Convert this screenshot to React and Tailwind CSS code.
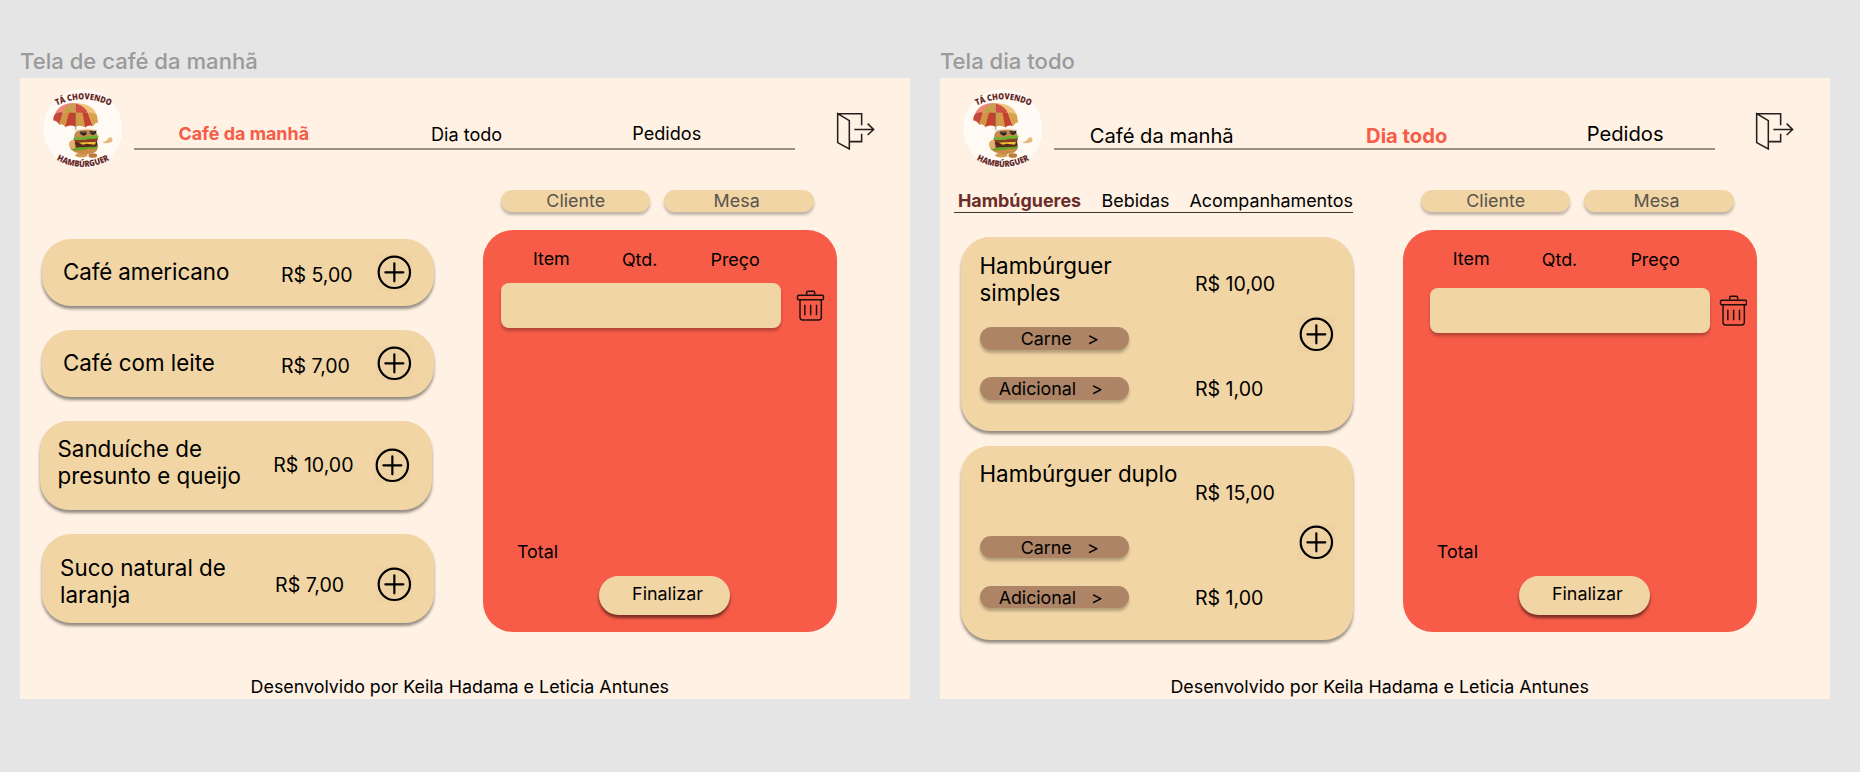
import React from "react";

const cardShadow = "shadow-[0_3px_3px_rgba(0,0,0,0.42)]";

function Logo({ id }) {
  return (
    <svg className="mt-[10.5px] ml-[22.3px] h-[81.6px] w-[81.6px] shrink-0" viewBox="37.6 24.6 244.8 244.8">
      <defs>
        <path id={`${id}-top`} d="M82 77 Q160 40 242 78" />
        <path id={`${id}-bottom`} d="M81 240 Q160 283 240 240" />
      </defs>
      <circle cx="160" cy="147" r="121" fill="#fffaf4" stroke="#f3e8dc" strokeWidth="1.5" />
      <g fill="#642726" className="font-['Open_Sans',sans-serif] text-[26px] font-extrabold">
        <text>
          <textPath href={`#${id}-top`} textLength="166" lengthAdjust="spacingAndGlyphs">TÁ CHOVENDO</textPath>
        </text>
        <text>
          <textPath href={`#${id}-bottom`} textLength="166" lengthAdjust="spacingAndGlyphs">HAMBÚRGUER</textPath>
        </text>
      </g>
      {/* umbrella */}
      <path d="M138 70 C108 68 84 82 77 102 Q88 94 101 98 Q108 80 138 70Z" fill="#ee8877" />
      <path d="M138 70 C114 74 102 86 100 98 Q118 101 138 99Z" fill="#c6a04a" />
      <path d="M138 70 C160 72 172 84 175 98 Q156 101 138 99Z" fill="#cf4f43" />
      <path d="M138 70 C174 70 196 84 202 105 Q188 96 175 98 Q168 80 138 70Z" fill="#f0c67f" />
      <path d="M77 102 Q88 94 101 98 L90 135 Q82 122 71 122Q71 110 77 102Z" fill="#c5483a" />
      <path d="M101 98 L118 99 L108 142 Q100 130 88 135Z" fill="#d09443" />
      <path d="M118 99 H138 V141 Q122 133 107 142Z" fill="#c4412f" />
      <path d="M138 98 L160 99 L168 143 Q152 134 138 141Z" fill="#d09a48" />
      <path d="M159 99 L175 98 L190 139 Q178 133 167 143Z" fill="#c4412f" />
      <path d="M175 98 Q190 96 202 105 L206 127 Q198 128 190 139Z" fill="#dba24e" />
      <path d="M138 98 L139 150" stroke="#6c5540" strokeWidth="2" />
      {/* burger */}
      <ellipse cx="156" cy="226" rx="18" ry="7" fill="#d39a52" />
      <ellipse cx="190" cy="227" rx="13" ry="7" fill="#b97a3a" />
      <path d="M124 206 Q160 196 204 202 Q206 222 168 223 Q132 222 124 206Z" fill="#c98b45" />
      <path d="M122 208 Q134 194 160 201 Q184 190 207 203 Q196 210 178 206 Q150 216 122 208Z" fill="#63a62a" />
      <path d="M134 184 L202 180 L205 200 L134 203Z" fill="#57291a" />
      <path d="M146 188 L200 186 L196 195 L172 192 L160 195Z" fill="#f2c035" />
      <path d="M132 178 L206 174 L203 184 L134 188Z" fill="#8d3d24" />
      <path d="M134 176 Q132 152 156 149 L184 149 Q204 151 204 171 Q168 176 134 176Z" fill="#c58a4e" />
      <path d="M130 178 Q136 168 158 174 Q184 164 208 168 Q206 180 184 176 Q154 184 130 178Z" fill="#6cb22f" />
      <path d="M138 153 Q168 143 202 152" fill="none" stroke="#f3dcc0" strokeWidth="4" />
      <path d="M151 156 L171 155 Q174 166 162 167 Q152 166 151 156Z M180 154 L201 153 Q201 164 190 165 Q181 164 180 154Z" fill="#231a18" />
      <path d="M154 160 L169 158 M183 158 L197 156" stroke="#8f8a86" strokeWidth="2" />
      <path d="M135 178 Q116 182 119 198 Q122 210 133 207 Q142 202 137 194Z" fill="#e2ae6c" />
      <path d="M218 184 Q228 190 238 174 Q246 170 249 178 Q252 188 232 190 Q220 190 218 184Z" fill="#e6b878" />
    </svg>
  );
}

function LogoutIcon() {
  return (
    <svg className="mt-[33.7px] ml-[40.1px] h-[38.3px] w-[39.3px] shrink-0" viewBox="0 0 118 115" fill="none" stroke="#231f20" strokeWidth="4.6">
      <path d="M5 5 V92 L40 111 V26Z M5 5 H77 V40 M77 65 V89 H42 M55 52.500 H112 M95 35 L113 52.500 L95 69" />
    </svg>
  );
}

function TrashIcon() {
  return (
    <svg className="mt-[7.3px] h-[31.3px] w-[28.7px] shrink-0" viewBox="0 0 86 94" fill="none" stroke="#1c0f0d" strokeWidth="4.400">
      <path d="M32 14 V8 Q32 4 36 4 H52 Q56 4 56 8 V14" />
      <rect x="4.500" y="15.500" width="78" height="14" rx="4" />
      <path d="M12 30 V82 Q12 90 20 90 H68 Q76 90 76 82 V30 M26.500 44 V76 M44 44 V76 M61.500 44 V76" />
    </svg>
  );
}

function PlusIcon({ className = "" }) {
  return (
    <svg className={`h-[36.7px] w-[36.7px] shrink-0 ${className}`} viewBox="0 0 110 110" fill="none" stroke="#000" strokeWidth="6.500">
      <rect width="110" height="110" fill="#efd2a2" stroke="none" />
      <circle cx="55" cy="55" r="47" />
      <path d="M55 28 V82 M28 55 H82" strokeLinecap="round" />
    </svg>
  );
}

function Pill({ children, className = "" }) {
  return (
    <div className={`h-[22.4px] w-[149.4px] rounded-full text-[17.9px] leading-[22px] whitespace-pre shadow-[0_3px_3px_rgba(0,0,0,0.25)] ${className}`}>
      {children}
    </div>
  );
}

function OrderPanel({ rowClass, gapClass }) {
  return (
    <section className="w-[353.6px] shrink-0 pt-[11.7px]">
      <div className="flex gap-[14px] pl-[17.7px]">
        <Pill className="bg-[#f1d5a4] text-center text-[#58534e]">Cliente</Pill>
        <Pill className="bg-[#f1d5a4] pr-[5px] text-center text-[#58534e]">Mesa</Pill>
      </div>
      <div className="mt-[17.9px] h-[402.5px] rounded-[30px] bg-[#f65c48] pt-[16.8px] text-[17.9px] leading-[24px]">
        <div className="grid h-[26px] grid-cols-[89px_88.600px_auto] pl-[49.5px]">
          <span>Item</span>
          <span className="pt-[1.2px]">Qtd.</span>
          <span className="pt-[1.5px]">Preço</span>
        </div>
        <div className={`flex h-[267px] items-start ${rowClass} ${gapClass}`}>
          <div className="h-[45.4px] w-[280px] shrink-0 rounded-[8px] bg-[#f1d5a4] shadow-[0_3px_3px_rgba(0,0,0,0.25)]" />
          <TrashIcon />
        </div>
        <div className="pl-[33.5px]">Total</div>
        <button className="mt-[12.2px] ml-[115.7px] block h-[38.8px] w-[131px] rounded-full bg-[#f1d5a4] pb-[1.6px] pl-[33px] text-left shadow-[0_3px_3px_rgba(0,0,0,0.5)]">
          Finalizar
        </button>
      </div>
    </section>
  );
}

function Frame({ id, title, navClass, nav, children, rowClass, gapClass }) {
  return (
    <div className="w-[889.8px] shrink-0">
      <h2 className="h-[30.2px] text-[22.1px] leading-[27px] font-medium text-[#9a9a9a]">{title}</h2>
      <main className="h-[621.4px] bg-[#fff1e3] text-black">
        <header className="flex h-[100px] items-start">
          <Logo id={id} />
          <nav className={`ml-[10.1px] grid h-[72px] w-[661.5px] items-start border-b-2 border-[#9b9188] leading-[24px] ${navClass}`}>
            {nav.map(([label, cls]) => (
              <a key={label} className={cls}>{label}</a>
            ))}
          </nav>
          <LogoutIcon />
        </header>
        <div className="flex h-[480px]">
          <div className="w-[463.4px] shrink-0">{children}</div>
          <OrderPanel rowClass={rowClass} gapClass={gapClass} />
        </div>
        <footer className="pt-[17.2px] pl-[230.6px] text-[17.86px] leading-[24px]">
          Desenvolvido por Keila Hadama e Leticia Antunes
        </footer>
      </main>
    </div>
  );
}

const breakfast = [
  { name: ["Café americano"], price: "R$ 5,00", card: "h-[66.8px] ml-[21.6px] mb-[24.200px] grid-cols-[218px_94.700px_auto] pl-[21.3px]", nameCls: "pb-[2px] tracking-[-0.07px]", priceCls: "pt-[5px]", plusCls: "" },
  { name: ["Café com leite"], price: "R$ 7,00", card: "h-[66.8px] ml-[21.6px] mb-[24.200px] grid-cols-[218px_94.700px_auto] pl-[21.3px]", nameCls: "pb-[2px]", priceCls: "pt-[5px]", plusCls: "" },
  { name: ["Sanduíche de", "presunto e queijo"], price: "R$ 10,00", card: "h-[89px] ml-[19.6px] mb-[24px] grid-cols-[215.800px_100.400px_auto] pl-[17.9px]", nameCls: "pb-[7.4px]", priceCls: "", plusCls: "-mt-px" },
  { name: ["Suco natural de", "laranja"], price: "R$ 7,00", card: "h-[89px] ml-[21.6px] grid-cols-[215px_101px_auto] pl-[18.5px]", nameCls: "pt-[5.8px]", priceCls: "pt-[12.6px]", plusCls: "mt-[11.4px]" },
];

function BreakfastCard({ item }) {
  return (
    <article className={`grid w-[392.4px] items-center rounded-[29px] bg-[#f1d5a4] ${cardShadow} ${item.card}`}>
      <div className={`text-[22.36px] leading-[27px] ${item.nameCls}`}>
        {item.name.map((line) => <div key={line} className="whitespace-nowrap">{line}</div>)}
      </div>
      <div className={`text-[19.56px] leading-[24px] ${item.priceCls}`}>{item.price}</div>
      <PlusIcon className={item.plusCls} />
    </article>
  );
}

function BurgerCard({ name, price, className }) {
  return (
    <article className={`ml-[21.6px] grid h-[193.7px] w-[391.9px] grid-cols-[215.500px_103px_auto] items-start rounded-[29px] bg-[#f1d5a4] pl-[18px] ${cardShadow} ${className}`}>
      <div className="pt-[14.2px]">
        <div className="h-[54px] text-[22.36px] leading-[27px]">
          {name.map((line) => <div key={line} className="whitespace-nowrap">{line}</div>)}
        </div>
        <Pill className="mt-[21.6px] ml-[0.200px] bg-[#ae8466] pl-[41px] leading-[23px]">{"Carne   >"}</Pill>
        <Pill className="mt-[27.6px] ml-[0.200px] bg-[#ae8466] pl-[19px] leading-[23px] tracking-[-0.05px]">{"Adicional   >"}</Pill>
      </div>
      <div className="pt-[35px] text-[19.56px] leading-[24px]">
        <div>{price}</div>
        <div className="mt-[81px]">R$ 1,00</div>
      </div>
      <PlusIcon className="mt-[78.3px]" />
    </article>
  );
}

export default function App() {
  return (
    <div className="flex h-[772px] w-[1860px] gap-[30.1px] overflow-hidden bg-[#e5e5e5] pt-[47.7px] pl-[20px] font-['Inter',sans-serif]">
      <Frame
        id="cafe"
        title="Tela de café da manhã"
        navClass="grid-cols-[252.500px_201.300px_auto] pl-[44.5px] text-[17.9px]"
        nav={[
          ["Café da manhã", "pt-[44.6px] font-bold text-[#f65c48]"],
          ["Dia todo", "pt-[44.6px] text-[18.1px]"],
          ["Pedidos", "pt-[43.4px] text-[18.1px]"],
        ]}
        rowClass="pt-[10.2px] pl-[17.7px]"
        gapClass="gap-[15px]"
      >
        <div className="pt-[61px]">
          {breakfast.map((item) => <BreakfastCard key={item.name[0]} item={item} />)}
        </div>
      </Frame>
      <Frame
        id="dia"
        title="Tela dia todo"
        navClass="grid-cols-[276.400px_220.600px_auto] pl-[35.8px] text-[20.2px]"
        nav={[
          ["Café da manhã", "pt-[46px]"],
          ["Dia todo", "pt-[45.7px] font-bold text-[#f65c48]"],
          ["Pedidos", "pt-[44px]"],
        ]}
        rowClass="pt-[15.2px] pl-[26.7px]"
        gapClass="gap-[8.6px]"
      >
        <div className="ml-[14.4px] grid h-[35px] w-[398.6px] grid-cols-[143.600px_88px_auto] border-b border-[#3a3633] pt-[11.5px] pl-[3.7px] text-[17.9px] leading-[24px]">
          <a className="font-bold text-[#6b2d28]">Hambúgueres</a>
          <a>Bebidas</a>
          <a className="tracking-[-0.04px]">Acompanhamentos</a>
        </div>
        <BurgerCard name={["Hambúrguer", "simples"]} price="R$ 10,00" className="mt-[24.5px]" />
        <BurgerCard name={["Hambúrguer duplo"]} price="R$ 15,00" className="mt-[15px]" />
      </Frame>
    </div>
  );
}
